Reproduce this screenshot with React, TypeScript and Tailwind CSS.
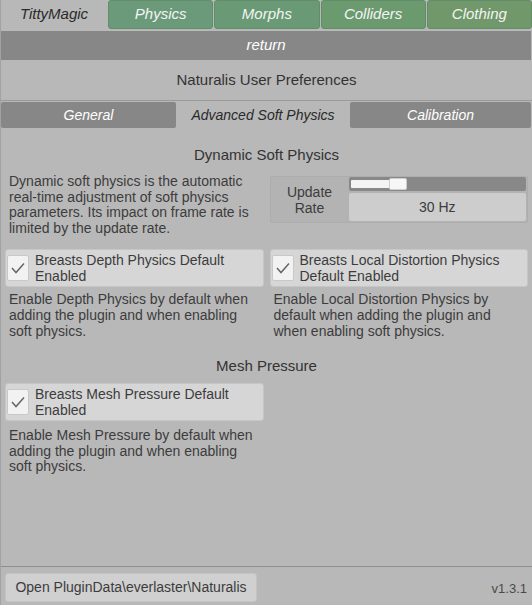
import React from "react";

const font = { fontFamily: '"Liberation Sans", Arial, sans-serif' };

function Check() {
  return (
    <div className="w-[22px] h-[26px] bg-[#f2f2f2] rounded-[2px] border border-[#c8c8c8] flex items-center justify-center shrink-0">
      <svg width="16" height="14" viewBox="0 0 16 14" fill="none">
        <polyline points="2,7 6,11.5 14,2.5" stroke="#666" strokeWidth="1.5" fill="none" />
      </svg>
    </div>
  );
}

function Toggle({ label }: { label: React.ReactNode }) {
  return (
    <div className="h-[38px] bg-[#d6d6d6] rounded-[3px] flex items-center pl-[1px] gap-[6px] border border-[#c6c6c6]">
      <Check />
      <div className="text-[14px] leading-[16px] text-[#3c3c3c]">{label}</div>
    </div>
  );
}

export default function App() {
  const tabs = [
    { name: "Physics", bg: "bg-[#6a9a79]" },
    { name: "Morphs", bg: "bg-[#6a9a75]" },
    { name: "Colliders", bg: "bg-[#6c9a6f]" },
    { name: "Clothing", bg: "bg-[#70986a]" },
  ];
  return (
    <div style={font} className="w-[532px] h-[605px] bg-[#b8b8b8] flex flex-col border-l border-[#a2a2a2] overflow-hidden">
      {/* top tabs */}
      <div className="flex h-[29px] gap-[1px]">
        <div className="w-[106px] flex items-center justify-center italic text-[15px] text-[#2a2a2a]">TittyMagic</div>
        {tabs.map((t) => (
          <div
            key={t.name}
            className={`flex-1 ${t.bg} rounded-[3px] border border-[#628d6b] flex items-center justify-center italic text-[15px] text-[#f4f4f4]`}
          >
            {t.name}
          </div>
        ))}
      </div>
      {/* return */}
      <div className="mt-[2px] mr-[1px] h-[29px] bg-[#878787] flex items-center justify-center italic text-[15px] text-white">
        return
      </div>
      {/* title */}
      <div className="h-[40px] flex items-center justify-center text-[15px] text-[#333]">
        Naturalis User Preferences
      </div>
      {/* subtabs */}
      <div className="flex border-t border-[#9a9a9a] h-[28px] pr-[1px] pt-[1px]">
        <div className="w-[175px] bg-[#878787] rounded-[2px] flex items-center justify-center italic text-[14px] text-white">
          General
        </div>
        <div className="w-[174px] flex items-center justify-center italic text-[14px] text-[#2a2a2a]">
          Advanced Soft Physics
        </div>
        <div className="flex-1 bg-[#878787] rounded-[2px] flex items-center justify-center italic text-[14px] text-white">
          Calibration
        </div>
      </div>
      {/* content */}
      <div className="flex flex-col pl-[4px] pr-[4px]">
        <div className="h-[30px] mt-[12px] flex items-center justify-center text-[15px] text-[#333]">
          Dynamic Soft Physics
        </div>
        <div className="grid grid-cols-2 gap-[6px] mt-[4px]">
          <div className="pl-[4px] text-[14px] leading-[15.6px] text-[#3c3c3c]">
            Dynamic soft physics is the automatic real-time adjustment of soft physics parameters. Its impact on frame rate is limited by the update rate.
          </div>
          <div className="h-[47px] mt-[2px] bg-[#b3b3b3] rounded-[2px] border border-[#adadad] flex">
            <div className="w-[78px] flex items-center justify-center text-center text-[14px] leading-[16px] text-[#3c3c3c]">
              Update
              <br />
              Rate
            </div>
            <div className="flex-1 flex flex-col pr-[1px]">
              <div className="h-[14px] bg-[#888888] rounded-[2px] relative">
                <div className="absolute left-[2px] top-[3px] w-[40px] h-[8px] bg-[#f4f4f4] rounded-[1px]" />
                <div className="absolute left-[40px] top-[1px] w-[18px] h-[12px] bg-[#f7f7f7] rounded-[2px] border border-[#cfcfcf]" />
              </div>
              <div className="mt-[2px] h-[28px] bg-[#cdcdcd] rounded-[2px] flex items-center justify-center text-[14px] text-[#3c3c3c]">
                30 Hz
              </div>
            </div>
          </div>
        </div>
        <div className="grid grid-cols-2 gap-[6px] mt-[13px]">
          <Toggle label={<>Breasts Depth Physics Default<br />Enabled</>} />
          <Toggle label={<>Breasts Local Distortion Physics<br />Default Enabled</>} />
        </div>
        <div className="grid grid-cols-2 gap-[6px] mt-[5px]">
          <div className="pl-[4px] text-[14px] leading-[15.6px] text-[#3c3c3c]">
            Enable Depth Physics by default when adding the plugin and when enabling soft physics.
          </div>
          <div className="pl-[4px] text-[14px] leading-[15.6px] text-[#3c3c3c]">
            Enable Local Distortion Physics by default when adding the plugin and when enabling soft physics.
          </div>
        </div>
        <div className="h-[30px] mt-[12px] flex items-center justify-center text-[15px] text-[#333]">
          Mesh Pressure
        </div>
        <div className="grid grid-cols-2 gap-[6px] mt-[2px]">
          <Toggle label={<>Breasts Mesh Pressure Default<br />Enabled</>} />
        </div>
        <div className="grid grid-cols-2 gap-[6px] mt-[7px]">
          <div className="pl-[4px] text-[14px] leading-[15.6px] text-[#3c3c3c]">
            Enable Mesh Pressure by default when adding the plugin and when enabling soft physics.
          </div>
        </div>
      </div>
      <div className="flex-1" />
      {/* bottom */}
      <div className="h-[39px] border-t border-[#8e8e8e] flex items-center justify-between pl-[4px] pr-[5px]">
        <div className="h-[29px] w-[252px] mt-[2px] bg-[#d0d0d0] rounded-[3px] border border-[#c4c4c4] flex items-center justify-center text-[14px] text-[#3c3c3c]">
          Open PluginData\everlaster\Naturalis
        </div>
        <div className="self-end mb-[7px] text-[13px] text-[#4a4a4a]">v1.3.1</div>
      </div>
    </div>
  );
}
